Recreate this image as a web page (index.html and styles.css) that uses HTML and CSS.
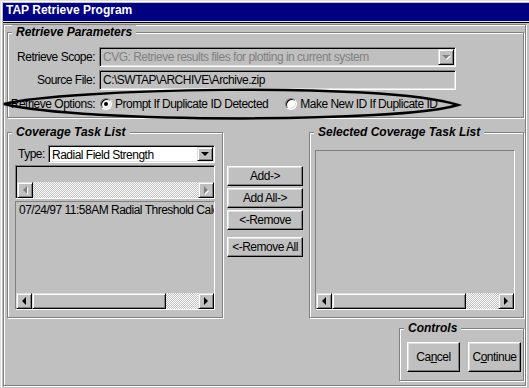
FILE: index.html
```html
<!DOCTYPE html>
<html lang="en">
<head>
    <meta charset="UTF-8">
    <meta name="viewport" content="width=device-width, initial-scale=1.0">
    <title>TAP Retrieve Program</title>
    <link rel="stylesheet" href="styles.css">
</head>
<body>
    <div class="window">
        <div class="titlebar">TAP Retrieve Program</div>
        <div class="client">
            <div class="frame">
                <div class="group params">
                    <span class="group-title">Retrieve Parameters</span>
                    <div class="field-row">
                        <span class="field-label">Retrieve Scope:</span>
                        <div class="combo sunken scope disabled">
                            <span class="combo-text">CVG: Retrieve results files for plotting in current system</span>
                            <span class="drop-btn raised"><span class="tri-down"></span></span>
                        </div>
                    </div>
                    <div class="field-row">
                        <span class="field-label">Source File:</span>
                        <div class="textbox sunken">C:\SWTAP\ARCHIVE\Archive.zip</div>
                    </div>
                    <div class="field-row options">
                        <span class="field-label">Retrieve Options:</span>
                        <span class="radio checked"></span>
                        <span class="radio-text">Prompt If Duplicate ID Detected</span>
                        <span class="radio second"></span>
                        <span class="radio-text">Make New ID If Duplicate ID</span>
                    </div>
                </div>

                <div class="lists">
                    <div class="group coverage">
                        <span class="group-title">Coverage Task List</span>
                        <div class="type-row">
                            <span>Type:</span>
                            <div class="combo sunken type">
                                <span class="combo-text">Radial Field Strength</span>
                                <span class="drop-btn raised"><span class="tri-down"></span></span>
                            </div>
                        </div>
                        <div class="listbox focused filter-box">
                            <div class="hscroll">
                                <span class="sb-btn raised disabled"><span class="tri-left"></span></span>
                                <span class="sb-track"></span>
                                <span class="sb-btn raised disabled"><span class="tri-right"></span></span>
                            </div>
                        </div>
                        <div class="listbox task-box">
                            <div class="list-item">07/24/97 11:58AM Radial Threshold Calculation</div>
                            <div class="hscroll">
                                <span class="sb-btn raised"><span class="tri-left"></span></span>
                                <span class="sb-thumb raised"></span>
                                <span class="sb-track"></span>
                                <span class="sb-btn raised"><span class="tri-right"></span></span>
                            </div>
                        </div>
                    </div>

                    <div class="move-buttons">
                        <button class="btn">Add-&gt;</button>
                        <button class="btn">Add All-&gt;</button>
                        <button class="btn">&lt;-Remove</button>
                        <button class="btn last">&lt;-Remove All</button>
                    </div>

                    <div class="group selected">
                        <span class="group-title">Selected Coverage Task List</span>
                        <div class="listbox selected-box">
                            <div class="hscroll">
                                <span class="sb-btn raised"><span class="tri-left"></span></span>
                                <span class="sb-thumb raised"></span>
                                <span class="sb-track"></span>
                                <span class="sb-btn raised"><span class="tri-right"></span></span>
                            </div>
                        </div>
                    </div>
                </div>

                <div class="group controls">
                    <span class="group-title">Controls</span>
                    <button class="btn">Ca<u>n</u>cel</button>
                    <button class="btn">C<u>o</u>ntinue</button>
                </div>
            </div>
        </div>

        <!-- hand-drawn marking around the options row -->
        <svg class="annotation" width="529" height="388" viewBox="0 0 529 388">
            <path d="M3,103 C60,88 380,80 457,104 C400,122 80,122 3,103 Z" fill="none" stroke="#000" stroke-width="2.5"/>
        </svg>
    </div>
</body>
</html>
```

FILE: styles.css
```css
body {
    margin: 0;
    background-color: #c0c0c0;
    font-family: "Liberation Sans", Arial, sans-serif;
    font-size: 12px;
    letter-spacing: -0.5px;
    color: #000;
    overflow: hidden;
}
.window {
    position: relative;
    width: 529px;
    height: 388px;
    box-sizing: border-box;
    padding: 2px 0 0 2px;
    border-left: 1px solid #dfdfdf;
    border-top: 1px solid #dfdfdf;
    box-shadow: inset 1px 1px 0 #fff;
    background-color: #c0c0c0;
}
.titlebar {
    height: 18px;
    line-height: 18px;
    padding-left: 3px;
    background-color: #000080;
    color: #fff;
    font: bold 12px "Liberation Sans", Arial, sans-serif;
    letter-spacing: 0;
    border-bottom: 1px solid #dfdfdf;
}
.client {
    border-top: 1px solid #000;
    padding-top: 1px;
}
.frame {
    width: 523px;
    height: 362px;
    box-sizing: border-box;
    border: 1px solid #808080;
    box-shadow: inset 1px 1px 0 #fff, 1px 1px 0 #fff;
    padding: 7px 1px 0 3px;
}

/* etched group boxes */
.group {
    position: relative;
    box-sizing: border-box;
    border: 1px solid #808080;
    box-shadow: inset 1px 1px 0 #fff, 1px 1px 0 #fff;
}
.group-title {
    position: absolute;
    top: -8px;
    left: 4px;
    padding: 0 4px;
    line-height: 14px;
    background-color: #c0c0c0;
    font: italic bold 12px "Liberation Sans", Arial, sans-serif;
    letter-spacing: 0;
}

/* 3d borders */
.sunken {
    box-sizing: border-box;
    border: 1px solid;
    border-color: #808080 #fff #fff #808080;
    box-shadow: inset 1px 1px 0 #000, inset -1px -1px 0 #dfdfdf;
}
.raised {
    box-sizing: border-box;
    border: 1px solid;
    border-color: #dfdfdf #000 #000 #dfdfdf;
    box-shadow: inset 1px 1px 0 #fff, inset -1px -1px 0 #808080;
    background-color: #c0c0c0;
}

/* retrieve parameters */
.params {
    height: 86px;
    padding-top: 14px;
}
.field-row {
    display: flex;
    align-items: center;
    height: 20px;
    margin-bottom: 3px;
}
.field-row.options {
    margin-top: 4px;
}
.field-label {
    width: 87px;
    margin-right: 4px;
    text-align: right;
    white-space: nowrap;
}
.combo {
    display: flex;
    align-items: stretch;
    background-color: #fff;
}
.combo.scope {
    width: 357px;
    height: 20px;
}
.combo.disabled {
    background-color: #c0c0c0;
    color: #808080;
}
.combo-text {
    flex: 1;
    padding-left: 3px;
    line-height: 16px;
    margin-top: 1px;
    white-space: nowrap;
    overflow: hidden;
}
.drop-btn {
    width: 16px;
    margin: 1px 1px 1px 0;
    display: flex;
    align-items: center;
    justify-content: center;
}
.textbox {
    width: 357px;
    height: 20px;
    line-height: 18px;
    padding-left: 3px;
    white-space: nowrap;
}

/* arrows */
.tri-down {
    width: 0;
    height: 0;
    border-left: 4px solid transparent;
    border-right: 4px solid transparent;
    border-top: 4px solid #000;
}
.tri-left {
    width: 0;
    height: 0;
    border-top: 4px solid transparent;
    border-bottom: 4px solid transparent;
    border-right: 4px solid #000;
}
.tri-right {
    width: 0;
    height: 0;
    border-top: 4px solid transparent;
    border-bottom: 4px solid transparent;
    border-left: 4px solid #000;
}
.disabled .tri-down,
.disabled .tri-left,
.disabled .tri-right {
    filter: drop-shadow(1px 1px 0 #fff);
}
.disabled .tri-down {
    border-top-color: #808080;
}
.disabled .tri-left {
    border-right-color: #808080;
}
.disabled .tri-right {
    border-left-color: #808080;
}

/* radios */
.radio {
    position: relative;
    flex-shrink: 0;
    width: 12px;
    height: 12px;
    box-sizing: border-box;
    border-radius: 50%;
    border: 1px solid;
    border-color: #808080 #fff #fff #808080;
    box-shadow: inset 1px 1px 0 #000, inset -1px -1px 0 #dfdfdf;
    background-color: #fff;
    margin-left: 1px;
}
.radio.checked::after {
    content: "";
    position: absolute;
    left: 3px;
    top: 3px;
    width: 4px;
    height: 4px;
    border-radius: 50%;
    background-color: #000;
}
.radio.second {
    margin-left: 17px;
}
.radio-text {
    margin-left: 3px;
    white-space: nowrap;
}

/* lists row */
.lists {
    display: flex;
    margin-top: 14px;
    height: 186px;
}
.coverage {
    width: 216px;
    padding: 12px 7px 0 7px;
}
.type-row {
    display: flex;
    align-items: center;
    justify-content: space-between;
    padding-left: 3px;
}
.combo.type {
    width: 167px;
    height: 18px;
}
.listbox {
    box-sizing: border-box;
    display: flex;
    flex-direction: column;
    border: 1px solid;
    border-color: #808080 #fff #fff #808080;
    width: 200px;
}
.listbox.focused {
    padding: 1px 0 0 1px;
    box-shadow: inset 1px 1px 0 #000;
}
.filter-box {
    height: 34px;
    margin-top: 2px;
}
.task-box {
    height: 109px;
    margin-top: 2px;
}
.list-item {
    padding: 1px 0 0 3px;
    line-height: 15px;
    white-space: nowrap;
    overflow: hidden;
}
.hscroll {
    display: flex;
    height: 16px;
    margin-top: auto;
}
.sb-btn {
    width: 16px;
    height: 16px;
    display: flex;
    align-items: center;
    justify-content: center;
}
.sb-thumb {
    width: 134px;
    height: 16px;
}
.sb-track {
    flex: 1;
    background-image: repeating-conic-gradient(#fff 0 25%, #c0c0c0 0 50%);
    background-size: 2px 2px;
}

.move-buttons {
    display: flex;
    flex-direction: column;
    gap: 2px;
    width: 76px;
    margin: 34px 6px 0 4px;
}
.btn {
    box-sizing: border-box;
    height: 20px;
    padding: 0;
    border: 1px solid;
    border-color: #fff #000 #000 #fff;
    box-shadow: inset -1px -1px 0 #808080, inset 1px 1px 0 #dfdfdf;
    background-color: #c0c0c0;
    font: inherit;
    letter-spacing: inherit;
    color: #000;
    white-space: nowrap;
}
.btn.last {
    margin-top: 5px;
}
.selected {
    width: 215px;
    padding: 17px 0 0 5px;
}
.selected-box {
    height: 160px;
}

.controls {
    display: flex;
    gap: 8px;
    width: 125px;
    height: 53px;
    margin: 10px 0 0 auto;
    padding: 13px 0 0 7px;
}
.controls .btn {
    width: 53px;
    height: 30px;
}

.annotation {
    position: absolute;
    left: 0;
    top: 0;
    pointer-events: none;
}
```
